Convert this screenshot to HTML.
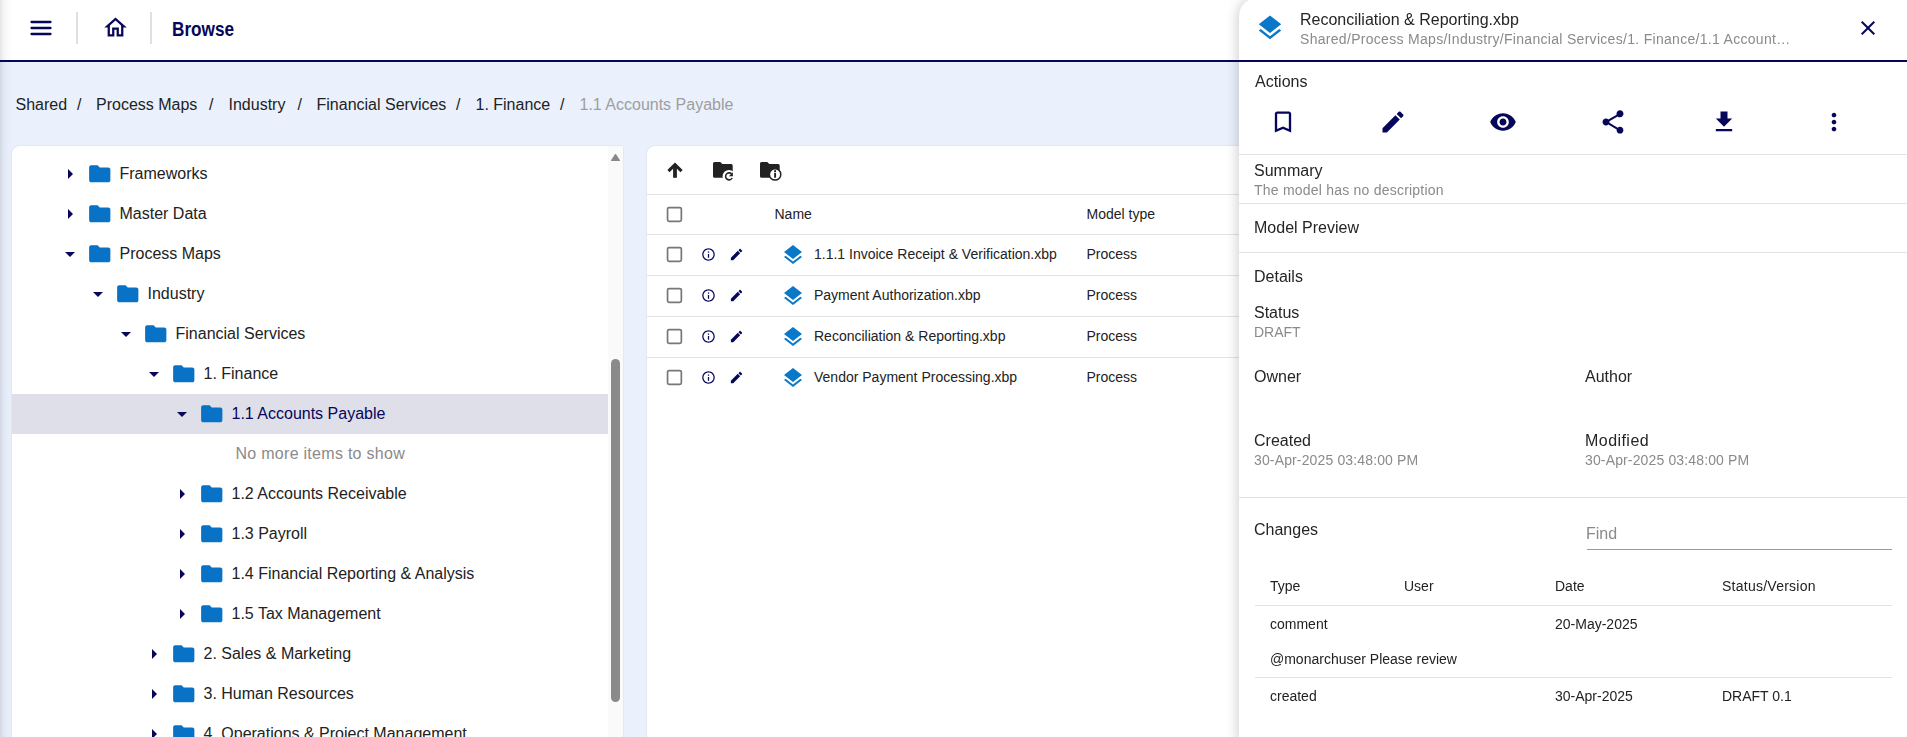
<!DOCTYPE html>
<html><head><meta charset="utf-8"><style>
html,body{margin:0;padding:0;}
body{width:1907px;height:737px;overflow:hidden;position:relative;background:#eaf1fd;font-family:"Liberation Sans",sans-serif;}
.t{position:absolute;white-space:nowrap;}
.g .t{will-change:transform;}
.a{position:absolute;}
</style></head><body>
<div class="a" style="left:0;top:0;width:14px;height:737px;background:linear-gradient(to right,rgba(0,0,0,0.11) 0px,rgba(0,0,0,0.05) 3px,rgba(0,0,0,0.02) 7px,rgba(0,0,0,0.0) 13px);z-index:5"></div>
<div class="a" style="left:0;top:0;width:1907px;height:60px;background:#fff;border-bottom:2px solid #06065a"></div>
<svg class="a" style="left:0;top:0" width="60" height="50"><path d="M31.5 22H50.5M31.5 28H50.5M31.5 34H50.5" stroke="#06065a" stroke-width="2.3" stroke-linecap="round"/></svg>
<div class="a" style="left:76px;top:12px;width:2px;height:32px;background:#e0e0e0"></div>
<svg style="position:absolute;left:101.5px;top:14.4px;" width="27" height="27" viewBox="0 0 24 24"><path fill="#06065a" d="M12 5.69l5 4.5V18h-2v-6H9v6H7v-7.81l5-4.5M12 3L2 12h3v8h6v-6h2v6h6v-8h3L12 3z"/></svg>
<div class="a" style="left:150px;top:12px;width:2px;height:32px;background:#e0e0e0"></div>
<div class="t" style="left:172px;top:19px;font-size:20px;line-height:20px;color:#06065a;font-weight:700;transform:scaleX(0.86);transform-origin:0 0;">Browse</div>
<div class="t" style="left:15.5px;top:97px;font-size:16px;line-height:16px;color:#222222;font-weight:400;">Shared</div>
<div class="t" style="left:77px;top:97px;font-size:16px;line-height:16px;color:#222222;font-weight:400;">/</div>
<div class="t" style="left:96px;top:97px;font-size:16px;line-height:16px;color:#222222;font-weight:400;">Process Maps</div>
<div class="t" style="left:209px;top:97px;font-size:16px;line-height:16px;color:#222222;font-weight:400;">/</div>
<div class="t" style="left:228.5px;top:97px;font-size:16px;line-height:16px;color:#222222;font-weight:400;">Industry</div>
<div class="t" style="left:297.5px;top:97px;font-size:16px;line-height:16px;color:#222222;font-weight:400;">/</div>
<div class="t" style="left:316.5px;top:97px;font-size:16px;line-height:16px;color:#222222;font-weight:400;">Financial Services</div>
<div class="t" style="left:456px;top:97px;font-size:16px;line-height:16px;color:#222222;font-weight:400;">/</div>
<div class="t" style="left:475.5px;top:97px;font-size:16px;line-height:16px;color:#222222;font-weight:400;">1. Finance</div>
<div class="t" style="left:560px;top:97px;font-size:16px;line-height:16px;color:#222222;font-weight:400;">/</div>
<div class="t" style="left:579.5px;top:97px;font-size:16px;line-height:16px;color:#9e9e9e;font-weight:400;">1.1 Accounts Payable</div>
<div class="a" style="left:12px;top:146px;width:611px;height:600px;background:#fff;border-radius:8px 0 0 0;box-shadow:0 0 2px rgba(0,0,0,0.12);overflow:hidden">
</div>
<div class="a" style="left:608px;top:146px;width:15px;height:600px;background:#fafafa"></div>
<svg class="a" style="left:608px;top:146px" width="15" height="20"><path d="M11.3 14.4 L7.5 8.6 L3.7 14.4 Z" fill="#888" stroke="#888" stroke-width="1.3" stroke-linejoin="round"/></svg>
<div class="a" style="left:611px;top:359px;width:9px;height:343px;border-radius:4.5px;background:#8a8a8a"></div>
<div class="a" style="left:12px;top:394px;width:596px;height:40px;background:#dfdfe9"></div>
<svg style="position:absolute;left:58px;top:162px;" width="24" height="24" viewBox="0 0 24 24"><path fill="#06065a" d="M10 17l5-5-5-5v10z"/></svg>
<svg style="position:absolute;left:87.25px;top:161.1px;" width="25.5" height="25.5" viewBox="0 0 24 24"><path fill="#0872c6" d="M10 4H4c-1.1 0-1.99.9-1.99 2L2 18c0 1.1.9 2 2 2h16c1.1 0 2-.9 2-2V8c0-1.1-.9-2-2-2h-8l-2-2z"/></svg>
<div class="t" style="left:119.5px;top:166px;font-size:16px;line-height:16px;color:#222222;font-weight:400;">Frameworks</div>
<svg style="position:absolute;left:58px;top:202px;" width="24" height="24" viewBox="0 0 24 24"><path fill="#06065a" d="M10 17l5-5-5-5v10z"/></svg>
<svg style="position:absolute;left:87.25px;top:201.1px;" width="25.5" height="25.5" viewBox="0 0 24 24"><path fill="#0872c6" d="M10 4H4c-1.1 0-1.99.9-1.99 2L2 18c0 1.1.9 2 2 2h16c1.1 0 2-.9 2-2V8c0-1.1-.9-2-2-2h-8l-2-2z"/></svg>
<div class="t" style="left:119.5px;top:206px;font-size:16px;line-height:16px;color:#222222;font-weight:400;">Master Data</div>
<svg style="position:absolute;left:58px;top:242px;" width="24" height="24" viewBox="0 0 24 24"><path fill="#06065a" d="M7 10l5 5 5-5z"/></svg>
<svg style="position:absolute;left:87.25px;top:241.1px;" width="25.5" height="25.5" viewBox="0 0 24 24"><path fill="#0872c6" d="M10 4H4c-1.1 0-1.99.9-1.99 2L2 18c0 1.1.9 2 2 2h16c1.1 0 2-.9 2-2V8c0-1.1-.9-2-2-2h-8l-2-2z"/></svg>
<div class="t" style="left:119.5px;top:246px;font-size:16px;line-height:16px;color:#222222;font-weight:400;">Process Maps</div>
<svg style="position:absolute;left:86px;top:282px;" width="24" height="24" viewBox="0 0 24 24"><path fill="#06065a" d="M7 10l5 5 5-5z"/></svg>
<svg style="position:absolute;left:115.25px;top:281.1px;" width="25.5" height="25.5" viewBox="0 0 24 24"><path fill="#0872c6" d="M10 4H4c-1.1 0-1.99.9-1.99 2L2 18c0 1.1.9 2 2 2h16c1.1 0 2-.9 2-2V8c0-1.1-.9-2-2-2h-8l-2-2z"/></svg>
<div class="t" style="left:147.5px;top:286px;font-size:16px;line-height:16px;color:#222222;font-weight:400;">Industry</div>
<svg style="position:absolute;left:114px;top:322px;" width="24" height="24" viewBox="0 0 24 24"><path fill="#06065a" d="M7 10l5 5 5-5z"/></svg>
<svg style="position:absolute;left:143.25px;top:321.1px;" width="25.5" height="25.5" viewBox="0 0 24 24"><path fill="#0872c6" d="M10 4H4c-1.1 0-1.99.9-1.99 2L2 18c0 1.1.9 2 2 2h16c1.1 0 2-.9 2-2V8c0-1.1-.9-2-2-2h-8l-2-2z"/></svg>
<div class="t" style="left:175.5px;top:326px;font-size:16px;line-height:16px;color:#222222;font-weight:400;">Financial Services</div>
<svg style="position:absolute;left:142px;top:362px;" width="24" height="24" viewBox="0 0 24 24"><path fill="#06065a" d="M7 10l5 5 5-5z"/></svg>
<svg style="position:absolute;left:171.25px;top:361.1px;" width="25.5" height="25.5" viewBox="0 0 24 24"><path fill="#0872c6" d="M10 4H4c-1.1 0-1.99.9-1.99 2L2 18c0 1.1.9 2 2 2h16c1.1 0 2-.9 2-2V8c0-1.1-.9-2-2-2h-8l-2-2z"/></svg>
<div class="t" style="left:203.5px;top:366px;font-size:16px;line-height:16px;color:#222222;font-weight:400;">1. Finance</div>
<svg style="position:absolute;left:170px;top:402px;" width="24" height="24" viewBox="0 0 24 24"><path fill="#06065a" d="M7 10l5 5 5-5z"/></svg>
<svg style="position:absolute;left:199.25px;top:401.1px;" width="25.5" height="25.5" viewBox="0 0 24 24"><path fill="#0872c6" d="M10 4H4c-1.1 0-1.99.9-1.99 2L2 18c0 1.1.9 2 2 2h16c1.1 0 2-.9 2-2V8c0-1.1-.9-2-2-2h-8l-2-2z"/></svg>
<div class="t" style="left:231.5px;top:406px;font-size:16px;line-height:16px;color:#06065a;font-weight:400;">1.1 Accounts Payable</div>
<div class="t" style="left:235.5px;top:446px;font-size:16px;line-height:16px;color:#8a8a8a;font-weight:400;letter-spacing:0.28px">No more items to show</div>
<svg style="position:absolute;left:170px;top:482px;" width="24" height="24" viewBox="0 0 24 24"><path fill="#06065a" d="M10 17l5-5-5-5v10z"/></svg>
<svg style="position:absolute;left:199.25px;top:481.1px;" width="25.5" height="25.5" viewBox="0 0 24 24"><path fill="#0872c6" d="M10 4H4c-1.1 0-1.99.9-1.99 2L2 18c0 1.1.9 2 2 2h16c1.1 0 2-.9 2-2V8c0-1.1-.9-2-2-2h-8l-2-2z"/></svg>
<div class="t" style="left:231.5px;top:486px;font-size:16px;line-height:16px;color:#222222;font-weight:400;">1.2 Accounts Receivable</div>
<svg style="position:absolute;left:170px;top:522px;" width="24" height="24" viewBox="0 0 24 24"><path fill="#06065a" d="M10 17l5-5-5-5v10z"/></svg>
<svg style="position:absolute;left:199.25px;top:521.1px;" width="25.5" height="25.5" viewBox="0 0 24 24"><path fill="#0872c6" d="M10 4H4c-1.1 0-1.99.9-1.99 2L2 18c0 1.1.9 2 2 2h16c1.1 0 2-.9 2-2V8c0-1.1-.9-2-2-2h-8l-2-2z"/></svg>
<div class="t" style="left:231.5px;top:526px;font-size:16px;line-height:16px;color:#222222;font-weight:400;">1.3 Payroll</div>
<svg style="position:absolute;left:170px;top:562px;" width="24" height="24" viewBox="0 0 24 24"><path fill="#06065a" d="M10 17l5-5-5-5v10z"/></svg>
<svg style="position:absolute;left:199.25px;top:561.1px;" width="25.5" height="25.5" viewBox="0 0 24 24"><path fill="#0872c6" d="M10 4H4c-1.1 0-1.99.9-1.99 2L2 18c0 1.1.9 2 2 2h16c1.1 0 2-.9 2-2V8c0-1.1-.9-2-2-2h-8l-2-2z"/></svg>
<div class="t" style="left:231.5px;top:566px;font-size:16px;line-height:16px;color:#222222;font-weight:400;">1.4 Financial Reporting &amp; Analysis</div>
<svg style="position:absolute;left:170px;top:602px;" width="24" height="24" viewBox="0 0 24 24"><path fill="#06065a" d="M10 17l5-5-5-5v10z"/></svg>
<svg style="position:absolute;left:199.25px;top:601.1px;" width="25.5" height="25.5" viewBox="0 0 24 24"><path fill="#0872c6" d="M10 4H4c-1.1 0-1.99.9-1.99 2L2 18c0 1.1.9 2 2 2h16c1.1 0 2-.9 2-2V8c0-1.1-.9-2-2-2h-8l-2-2z"/></svg>
<div class="t" style="left:231.5px;top:606px;font-size:16px;line-height:16px;color:#222222;font-weight:400;">1.5 Tax Management</div>
<svg style="position:absolute;left:142px;top:642px;" width="24" height="24" viewBox="0 0 24 24"><path fill="#06065a" d="M10 17l5-5-5-5v10z"/></svg>
<svg style="position:absolute;left:171.25px;top:641.1px;" width="25.5" height="25.5" viewBox="0 0 24 24"><path fill="#0872c6" d="M10 4H4c-1.1 0-1.99.9-1.99 2L2 18c0 1.1.9 2 2 2h16c1.1 0 2-.9 2-2V8c0-1.1-.9-2-2-2h-8l-2-2z"/></svg>
<div class="t" style="left:203.5px;top:646px;font-size:16px;line-height:16px;color:#222222;font-weight:400;">2. Sales &amp; Marketing</div>
<svg style="position:absolute;left:142px;top:682px;" width="24" height="24" viewBox="0 0 24 24"><path fill="#06065a" d="M10 17l5-5-5-5v10z"/></svg>
<svg style="position:absolute;left:171.25px;top:681.1px;" width="25.5" height="25.5" viewBox="0 0 24 24"><path fill="#0872c6" d="M10 4H4c-1.1 0-1.99.9-1.99 2L2 18c0 1.1.9 2 2 2h16c1.1 0 2-.9 2-2V8c0-1.1-.9-2-2-2h-8l-2-2z"/></svg>
<div class="t" style="left:203.5px;top:686px;font-size:16px;line-height:16px;color:#222222;font-weight:400;">3. Human Resources</div>
<svg style="position:absolute;left:142px;top:722px;" width="24" height="24" viewBox="0 0 24 24"><path fill="#06065a" d="M10 17l5-5-5-5v10z"/></svg>
<svg style="position:absolute;left:171.25px;top:721.1px;" width="25.5" height="25.5" viewBox="0 0 24 24"><path fill="#0872c6" d="M10 4H4c-1.1 0-1.99.9-1.99 2L2 18c0 1.1.9 2 2 2h16c1.1 0 2-.9 2-2V8c0-1.1-.9-2-2-2h-8l-2-2z"/></svg>
<div class="t" style="left:203.5px;top:726px;font-size:16px;line-height:16px;color:#222222;font-weight:400;">4. Operations &amp; Project Management</div>
<div class="a" style="left:647px;top:146px;width:700px;height:600px;background:#fff;border-radius:8px 0 0 0;box-shadow:0 0 2px rgba(0,0,0,0.12)"></div>
<svg class="a" style="left:660px;top:155px" width="30" height="30"><path d="M15 22.8V10" stroke="#222" stroke-width="3.8" fill="none"/><path d="M8.45 16.15L15 9.6L21.55 16.15" stroke="#222" stroke-width="3.1" fill="none"/></svg>
<svg class="a" style="left:708px;top:156px" width="80" height="30" viewBox="0 0 80 30">
<path fill="#222" d="M6.5 6H12.3L14.3 8H23.2Q24.7 8 24.7 9.5V20.3Q24.7 21.8 23.2 21.8H6.5Q5 21.8 5 20.3V7.5Q5 6 6.5 6Z"/>
<circle cx="21" cy="20.3" r="6.4" fill="#fff"/>
<path d="M23.6 17.9A3.5 3.5 0 1 0 24.2 22" fill="none" stroke="#222" stroke-width="1.55"/>
<path d="M24.9 16.2V20.2H20.9Z" fill="#222"/>
<path fill="#222" d="M53.5 6H59.3L61.3 8H70.2Q71.7 8 71.7 9.5V20.3Q71.7 21.8 70.2 21.8H53.5Q52 21.8 52 20.3V7.5Q52 6 53.5 6Z"/>
<circle cx="67.1" cy="18.4" r="5.7" fill="#fff" stroke="#222" stroke-width="1.5"/>
<circle cx="67.1" cy="15.2" r="1.1" fill="#222"/>
<rect x="66.15" y="16.9" width="1.9" height="4.8" fill="#222"/>
</svg>
<div class="a" style="left:647px;top:194px;width:600px;height:1px;background:#e3e3e3"></div>
<svg class="a" style="left:664px;top:204px" width="22" height="22"><rect x="3.55" y="3.55" width="13.8" height="13.8" rx="1.5" fill="none" stroke="#777" stroke-width="1.7"/></svg>
<div class="t" style="left:774.5px;top:207px;font-size:14px;line-height:14px;color:#222222;font-weight:400;">Name</div>
<div class="t" style="left:1086.5px;top:207px;font-size:14px;line-height:14px;color:#222222;font-weight:400;">Model type</div>
<div class="a" style="left:647px;top:234px;width:600px;height:1px;background:#e3e3e3"></div>
<svg class="a" style="left:664px;top:244px" width="22" height="22"><rect x="3.55" y="3.55" width="13.8" height="13.8" rx="1.5" fill="none" stroke="#777" stroke-width="1.7"/></svg>
<svg style="position:absolute;left:701px;top:247px;" width="15" height="15" viewBox="0 0 24 24"><path fill="#06065a" d="M11 7h2v2h-2zm0 4h2v6h-2zm1-9C6.48 2 2 6.48 2 12s4.48 10 10 10 10-4.48 10-10S17.52 2 12 2zm0 18c-4.41 0-8-3.59-8-8s3.59-8 8-8 8 3.59 8 8-3.59 8-8 8z"/></svg>
<svg style="position:absolute;left:729px;top:247px;" width="15" height="15" viewBox="0 0 24 24"><path fill="#06065a" d="M3 17.25V21h3.75L17.81 9.94l-3.75-3.75L3 17.25zM20.71 7.04c.39-.39.39-1.02 0-1.41l-2.34-2.34c-.39-.39-1.02-.39-1.41 0l-1.83 1.83 3.75 3.75 1.83-1.83z"/></svg>
<svg style="position:absolute;left:780.7px;top:243px;" width="24" height="24" viewBox="0 0 24 24"><path fill="#0a78c8" d="M11.99 18.54l-7.37-5.73L3 14.07l9 7 9-7-1.63-1.27-7.38 5.74zM12 16l7.36-5.73L21 9l-9-7-9 7 1.63 1.27L12 16z"/></svg>
<div class="t" style="left:814px;top:247px;font-size:14px;line-height:14px;color:#222222;font-weight:400;">1.1.1 Invoice Receipt &amp; Verification.xbp</div>
<div class="t" style="left:1086.5px;top:247px;font-size:14px;line-height:14px;color:#222222;font-weight:400;">Process</div>
<div class="a" style="left:647px;top:275px;width:600px;height:1px;background:#e3e3e3"></div>
<svg class="a" style="left:664px;top:285px" width="22" height="22"><rect x="3.55" y="3.55" width="13.8" height="13.8" rx="1.5" fill="none" stroke="#777" stroke-width="1.7"/></svg>
<svg style="position:absolute;left:701px;top:288px;" width="15" height="15" viewBox="0 0 24 24"><path fill="#06065a" d="M11 7h2v2h-2zm0 4h2v6h-2zm1-9C6.48 2 2 6.48 2 12s4.48 10 10 10 10-4.48 10-10S17.52 2 12 2zm0 18c-4.41 0-8-3.59-8-8s3.59-8 8-8 8 3.59 8 8-3.59 8-8 8z"/></svg>
<svg style="position:absolute;left:729px;top:288px;" width="15" height="15" viewBox="0 0 24 24"><path fill="#06065a" d="M3 17.25V21h3.75L17.81 9.94l-3.75-3.75L3 17.25zM20.71 7.04c.39-.39.39-1.02 0-1.41l-2.34-2.34c-.39-.39-1.02-.39-1.41 0l-1.83 1.83 3.75 3.75 1.83-1.83z"/></svg>
<svg style="position:absolute;left:780.7px;top:284px;" width="24" height="24" viewBox="0 0 24 24"><path fill="#0a78c8" d="M11.99 18.54l-7.37-5.73L3 14.07l9 7 9-7-1.63-1.27-7.38 5.74zM12 16l7.36-5.73L21 9l-9-7-9 7 1.63 1.27L12 16z"/></svg>
<div class="t" style="left:814px;top:288px;font-size:14px;line-height:14px;color:#222222;font-weight:400;">Payment Authorization.xbp</div>
<div class="t" style="left:1086.5px;top:288px;font-size:14px;line-height:14px;color:#222222;font-weight:400;">Process</div>
<div class="a" style="left:647px;top:316px;width:600px;height:1px;background:#e3e3e3"></div>
<svg class="a" style="left:664px;top:326px" width="22" height="22"><rect x="3.55" y="3.55" width="13.8" height="13.8" rx="1.5" fill="none" stroke="#777" stroke-width="1.7"/></svg>
<svg style="position:absolute;left:701px;top:329px;" width="15" height="15" viewBox="0 0 24 24"><path fill="#06065a" d="M11 7h2v2h-2zm0 4h2v6h-2zm1-9C6.48 2 2 6.48 2 12s4.48 10 10 10 10-4.48 10-10S17.52 2 12 2zm0 18c-4.41 0-8-3.59-8-8s3.59-8 8-8 8 3.59 8 8-3.59 8-8 8z"/></svg>
<svg style="position:absolute;left:729px;top:329px;" width="15" height="15" viewBox="0 0 24 24"><path fill="#06065a" d="M3 17.25V21h3.75L17.81 9.94l-3.75-3.75L3 17.25zM20.71 7.04c.39-.39.39-1.02 0-1.41l-2.34-2.34c-.39-.39-1.02-.39-1.41 0l-1.83 1.83 3.75 3.75 1.83-1.83z"/></svg>
<svg style="position:absolute;left:780.7px;top:325px;" width="24" height="24" viewBox="0 0 24 24"><path fill="#0a78c8" d="M11.99 18.54l-7.37-5.73L3 14.07l9 7 9-7-1.63-1.27-7.38 5.74zM12 16l7.36-5.73L21 9l-9-7-9 7 1.63 1.27L12 16z"/></svg>
<div class="t" style="left:814px;top:329px;font-size:14px;line-height:14px;color:#222222;font-weight:400;">Reconciliation &amp; Reporting.xbp</div>
<div class="t" style="left:1086.5px;top:329px;font-size:14px;line-height:14px;color:#222222;font-weight:400;">Process</div>
<div class="a" style="left:647px;top:357px;width:600px;height:1px;background:#e3e3e3"></div>
<svg class="a" style="left:664px;top:367px" width="22" height="22"><rect x="3.55" y="3.55" width="13.8" height="13.8" rx="1.5" fill="none" stroke="#777" stroke-width="1.7"/></svg>
<svg style="position:absolute;left:701px;top:370px;" width="15" height="15" viewBox="0 0 24 24"><path fill="#06065a" d="M11 7h2v2h-2zm0 4h2v6h-2zm1-9C6.48 2 2 6.48 2 12s4.48 10 10 10 10-4.48 10-10S17.52 2 12 2zm0 18c-4.41 0-8-3.59-8-8s3.59-8 8-8 8 3.59 8 8-3.59 8-8 8z"/></svg>
<svg style="position:absolute;left:729px;top:370px;" width="15" height="15" viewBox="0 0 24 24"><path fill="#06065a" d="M3 17.25V21h3.75L17.81 9.94l-3.75-3.75L3 17.25zM20.71 7.04c.39-.39.39-1.02 0-1.41l-2.34-2.34c-.39-.39-1.02-.39-1.41 0l-1.83 1.83 3.75 3.75 1.83-1.83z"/></svg>
<svg style="position:absolute;left:780.7px;top:366px;" width="24" height="24" viewBox="0 0 24 24"><path fill="#0a78c8" d="M11.99 18.54l-7.37-5.73L3 14.07l9 7 9-7-1.63-1.27-7.38 5.74zM12 16l7.36-5.73L21 9l-9-7-9 7 1.63 1.27L12 16z"/></svg>
<div class="t" style="left:814px;top:370px;font-size:14px;line-height:14px;color:#222222;font-weight:400;">Vendor Payment Processing.xbp</div>
<div class="t" style="left:1086.5px;top:370px;font-size:14px;line-height:14px;color:#222222;font-weight:400;">Process</div>
<div class="a g" style="left:1239px;top:-2px;width:680px;height:745px;background:#fff;border-radius:18px 0 0 0;box-shadow:-2px 0 12px rgba(0,0,0,0.18);z-index:10">
<svg style="position:absolute;left:16px;top:15px;" width="30" height="30" viewBox="0 0 24 24"><path fill="#0a78c8" d="M11.99 18.54l-7.37-5.73L3 14.07l9 7 9-7-1.63-1.27-7.38 5.74zM12 16l7.36-5.73L21 9l-9-7-9 7 1.63 1.27L12 16z"/></svg>
<div class="t" style="left:61.0px;top:14px;font-size:16px;line-height:16px;color:#252525;font-weight:400;">Reconciliation &amp; Reporting.xbp</div>
<div class="t" style="left:61.0px;top:34px;font-size:14px;line-height:14px;color:#8a8a8a;font-weight:400;letter-spacing:0.3px">Shared/Process Maps/Industry/Financial Services/1. Finance/1.1 Account…</div>
<svg style="position:absolute;left:617px;top:18px;" width="24" height="24" viewBox="0 0 24 24"><path fill="#06065a" d="M19 6.41L17.59 5 12 10.59 6.41 5 5 6.41 10.59 12 5 17.59 6.41 19 12 13.41 17.59 19 19 17.59 13.41 12z"/></svg>
<div class="a" style="left:0px;top:62px;width:700px;height:2px;background:#06065a"></div>
<div class="t" style="left:16.0px;top:76px;font-size:16px;line-height:16px;color:#252525;font-weight:400;">Actions</div>
<svg style="position:absolute;left:30px;top:110px;" width="28" height="28" viewBox="0 0 24 24"><path fill="#06065a" d="M17 3H7c-1.1 0-1.99.9-1.99 2L5 21l7-3 7 3V5c0-1.1-.9-2-2-2zm0 15l-5-2.18L7 18V5h10v13z"/></svg>
<svg style="position:absolute;left:140px;top:110px;" width="28" height="28" viewBox="0 0 24 24"><path fill="#06065a" d="M3 17.25V21h3.75L17.81 9.94l-3.75-3.75L3 17.25zM20.71 7.04c.39-.39.39-1.02 0-1.41l-2.34-2.34c-.39-.39-1.02-.39-1.41 0l-1.83 1.83 3.75 3.75 1.83-1.83z"/></svg>
<svg style="position:absolute;left:250px;top:110px;" width="28" height="28" viewBox="0 0 24 24"><path fill="#06065a" d="M12 4.5C7 4.5 2.73 7.61 1 12c1.73 4.39 6 7.5 11 7.5s9.27-3.11 11-7.5c-1.73-4.39-6-7.5-11-7.5zM12 17c-2.76 0-5-2.24-5-5s2.24-5 5-5 5 2.24 5 5-2.24 5-5 5zm0-8c-1.66 0-3 1.34-3 3s1.34 3 3 3 3-1.34 3-3-1.34-3-3-3z"/></svg>
<svg style="position:absolute;left:360px;top:110px;" width="28" height="28" viewBox="0 0 24 24"><path fill="#06065a" d="M18 16.08c-.76 0-1.44.3-1.96.77L8.91 12.7c.05-.23.09-.46.09-.7s-.04-.47-.09-.7l7.05-4.11c.54.5 1.25.81 2.04.81 1.66 0 3-1.34 3-3s-1.34-3-3-3-3 1.34-3 3c0 .24.04.47.09.7L8.04 9.81C7.5 9.31 6.79 9 6 9c-1.66 0-3 1.34-3 3s1.34 3 3 3c.79 0 1.5-.31 2.04-.81l7.12 4.16c-.05.21-.08.43-.08.65 0 1.61 1.31 2.92 2.92 2.92 1.61 0 2.92-1.31 2.92-2.92s-1.31-2.92-2.92-2.92z"/></svg>
<svg style="position:absolute;left:471px;top:110px;" width="28" height="28" viewBox="0 0 24 24"><path fill="#06065a" d="M19 9h-4V3H9v6H5l7 7 7-7zM5 18v2h14v-2H5z"/></svg>
<svg style="position:absolute;left:581px;top:110px;" width="28" height="28" viewBox="0 0 24 24"><path fill="#06065a" d="M12 8c1.1 0 2-.9 2-2s-.9-2-2-2-2 .9-2 2 .9 2 2 2zm0 2c-1.1 0-2 .9-2 2s.9 2 2 2 2-.9 2-2-.9-2-2-2zm0 6c-1.1 0-2 .9-2 2s.9 2 2 2 2-.9 2-2-.9-2-2-2z"/></svg>
<div class="a" style="left:0px;top:156px;width:700px;height:1px;background:#e3e3e3"></div>
<div class="t" style="left:15.0px;top:165px;font-size:16px;line-height:16px;color:#252525;font-weight:400;">Summary</div>
<div class="t" style="left:15.0px;top:185px;font-size:14px;line-height:14px;color:#8a8a8a;font-weight:400;letter-spacing:0.22px">The model has no description</div>
<div class="a" style="left:0px;top:205px;width:700px;height:1px;background:#e3e3e3"></div>
<div class="t" style="left:15.0px;top:222px;font-size:16px;line-height:16px;color:#252525;font-weight:400;">Model Preview</div>
<div class="a" style="left:0px;top:254px;width:700px;height:1px;background:#e3e3e3"></div>
<div class="t" style="left:15.0px;top:271px;font-size:16px;line-height:16px;color:#252525;font-weight:400;">Details</div>
<div class="t" style="left:15.0px;top:307px;font-size:16px;line-height:16px;color:#252525;font-weight:400;">Status</div>
<div class="t" style="left:15.0px;top:327px;font-size:14px;line-height:14px;color:#8a8a8a;font-weight:400;">DRAFT</div>
<div class="t" style="left:15.0px;top:371px;font-size:16px;line-height:16px;color:#252525;font-weight:400;">Owner</div>
<div class="t" style="left:346.0px;top:371px;font-size:16px;line-height:16px;color:#252525;font-weight:400;">Author</div>
<div class="t" style="left:15.0px;top:435px;font-size:16px;line-height:16px;color:#252525;font-weight:400;">Created</div>
<div class="t" style="left:346.0px;top:435px;font-size:16px;line-height:16px;color:#252525;font-weight:400;letter-spacing:0.45px">Modified</div>
<div class="t" style="left:15.299999999999955px;top:455px;font-size:14px;line-height:14px;color:#8a8a8a;font-weight:400;letter-spacing:0.14px">30-Apr-2025 03:48:00 PM</div>
<div class="t" style="left:346.29999999999995px;top:455px;font-size:14px;line-height:14px;color:#8a8a8a;font-weight:400;letter-spacing:0.14px">30-Apr-2025 03:48:00 PM</div>
<div class="a" style="left:0px;top:499px;width:700px;height:1px;background:#e3e3e3"></div>
<div class="t" style="left:15.0px;top:524px;font-size:16px;line-height:16px;color:#252525;font-weight:400;">Changes</div>
<div class="t" style="left:347.0px;top:528px;font-size:16px;line-height:16px;color:#8a8a8a;font-weight:400;">Find</div>
<div class="a" style="left:348px;top:551px;width:305px;height:1px;background:#9a9a9a"></div>
<div class="t" style="left:31.0px;top:581px;font-size:14px;line-height:14px;color:#222222;font-weight:400;">Type</div>
<div class="t" style="left:165.0px;top:581px;font-size:14px;line-height:14px;color:#222222;font-weight:400;">User</div>
<div class="t" style="left:316.0px;top:581px;font-size:14px;line-height:14px;color:#222222;font-weight:400;">Date</div>
<div class="t" style="left:483.0px;top:581px;font-size:14px;line-height:14px;color:#222222;font-weight:400;letter-spacing:0.25px">Status/Version</div>
<div class="a" style="left:16px;top:607px;width:637px;height:1px;background:#e3e3e3"></div>
<div class="t" style="left:31.0px;top:619px;font-size:14px;line-height:14px;color:#222222;font-weight:400;">comment</div>
<div class="t" style="left:316.0px;top:619px;font-size:14px;line-height:14px;color:#222222;font-weight:400;">20-May-2025</div>
<div class="t" style="left:31.0px;top:654px;font-size:14px;line-height:14px;color:#222222;font-weight:400;">@monarchuser Please review</div>
<div class="a" style="left:16px;top:679px;width:637px;height:1px;background:#e3e3e3"></div>
<div class="t" style="left:31.0px;top:691px;font-size:14px;line-height:14px;color:#222222;font-weight:400;">created</div>
<div class="t" style="left:316.0px;top:691px;font-size:14px;line-height:14px;color:#222222;font-weight:400;">30-Apr-2025</div>
<div class="t" style="left:483.0px;top:691px;font-size:14px;line-height:14px;color:#222222;font-weight:400;">DRAFT 0.1</div>
</div>
</body></html>
